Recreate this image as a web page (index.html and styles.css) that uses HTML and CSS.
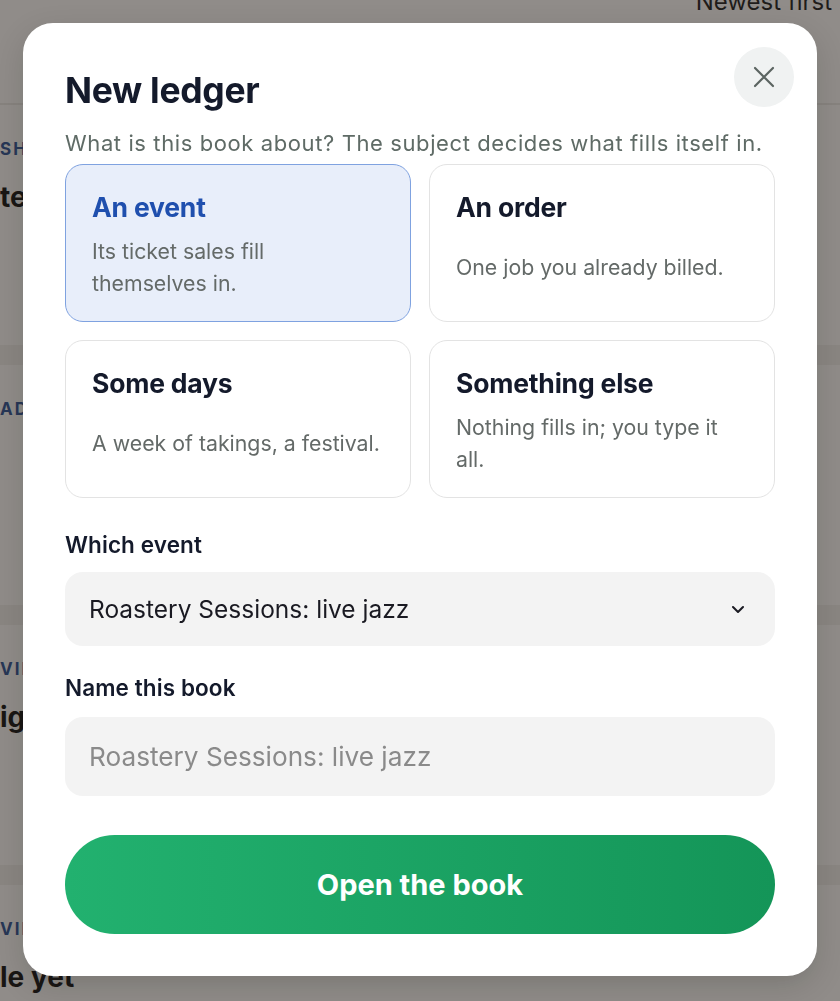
FILE: index.html
```html
<!DOCTYPE html>
<html lang="en">
<head>
    <meta charset="UTF-8">
    <meta name="viewport" content="width=device-width, initial-scale=1.0">
    <title>New ledger</title>
    <link rel="stylesheet" href="styles.css">
</head>
<body>
    <!-- Page behind the modal -->
    <div class="page">
        <div class="toolbar">
            <span class="sort">Newest first</span>
        </div>
        <div class="book-list">
            <div class="book-row">
                <p class="book-kind">SHOP</p>
                <p class="book-title">tea tasting</p>
            </div>
            <div class="book-row">
                <p class="book-kind">ADHOC</p>
            </div>
            <div class="book-row">
                <p class="book-kind">VIEW</p>
                <p class="book-title">ig night</p>
            </div>
            <div class="book-row">
                <p class="book-kind">VIEW</p>
                <p class="book-title">le yet</p>
            </div>
        </div>
    </div>

    <!-- Modal -->
    <div class="overlay">
        <div class="modal">
            <div class="modal-head">
                <h2>New ledger</h2>
                <button class="btn-close" aria-label="Close">
                    <svg width="22" height="22" viewBox="0 0 22 22" fill="none" stroke="currentColor" stroke-width="2.2" stroke-linecap="round">
                        <path d="M2 2 L20 20 M20 2 L2 20" />
                    </svg>
                </button>
            </div>
            <p class="lead">What is this book about? The subject decides what fills itself in.</p>

            <div class="subjects">
                <button class="subject selected">
                    <span class="subject-title">An event</span>
                    <span class="subject-desc">Its ticket sales fill themselves in.</span>
                </button>
                <button class="subject">
                    <span class="subject-title">An order</span>
                    <span class="subject-desc">One job you already billed.</span>
                </button>
                <button class="subject">
                    <span class="subject-title">Some days</span>
                    <span class="subject-desc">A week of takings, a festival.</span>
                </button>
                <button class="subject">
                    <span class="subject-title">Something else</span>
                    <span class="subject-desc">Nothing fills in; you type it all.</span>
                </button>
            </div>

            <label class="field-label">Which event</label>
            <button class="select">
                <span>Roastery Sessions: live jazz</span>
                <svg width="14" height="9" viewBox="0 0 14 9" fill="none" stroke="currentColor" stroke-width="2" stroke-linecap="round" stroke-linejoin="round">
                    <path d="M2 2 L7 7 L12 2" />
                </svg>
            </button>

            <label class="field-label">Name this book</label>
            <input class="text-input" type="text" placeholder="Roastery Sessions: live jazz" />

            <button class="btn-open">Open the book</button>
        </div>
    </div>
</body>
</html>
```

FILE: styles.css
```css
/* Basic Reset */
* {
    margin: 0;
    padding: 0;
    box-sizing: border-box;
}

body {
    font-family: Inter, "Noto Sans", sans-serif;
    background-color: #f3f2ef;
    height: 1001px;
    overflow: hidden;
}

/* Page behind */
.page {
    width: 100%;
}

.toolbar {
    height: 105px;
    display: flex;
    justify-content: flex-end;
    border-bottom: 2px solid #e2e0dc;
}

.sort {
    font-size: 24px;
    color: #1b1b1b;
    margin-top: -13px;
    margin-right: 8px;
}

.book-row {
    height: 260px;
    padding-top: 34px;
    border-bottom: 20px solid #e8e6e2;
}

.book-row:last-child {
    height: 116px;
    border-bottom: none;
}

.book-kind {
    font-size: 17px;
    font-weight: 700;
    letter-spacing: 2px;
    color: #2b4f8f;
}

.book-title {
    font-size: 28px;
    font-weight: 700;
    color: #111;
    margin-top: 21px;
}

/* Modal */
.overlay {
    position: fixed;
    top: 0;
    left: 0;
    width: 100%;
    height: 100%;
    background-color: rgba(35, 30, 25, 0.48);
    display: flex;
    justify-content: center;
    padding-top: 23px;
}

.modal {
    background-color: #fff;
    width: 794px;
    height: 953px;
    border-radius: 30px;
    padding: 42px 42px;
    box-shadow: 0 10px 30px rgba(0, 0, 0, 0.15);
    display: flex;
    flex-direction: column;
}

.modal-head {
    display: flex;
    justify-content: space-between;
    align-items: flex-start;
}

.modal h2 {
    font-size: 35.5px;
    font-weight: 700;
    color: #141a2b;
    line-height: 52px;
    letter-spacing: -0.3px;
}

.btn-close {
    width: 60px;
    height: 60px;
    border-radius: 50%;
    border: none;
    background-color: #f0f2f2;
    color: #5b6461;
    display: flex;
    align-items: center;
    justify-content: center;
    margin-top: -18px;
    margin-right: -19px;
    cursor: pointer;
}

.lead {
    font-size: 22px;
    line-height: 30px;
    letter-spacing: 0.6px;
    color: #5f6b66;
    margin-top: 11px;
    margin-bottom: 6px;
    white-space: nowrap;
}

.subjects {
    display: grid;
    grid-template-columns: 1fr 1fr;
    gap: 18px;
}

.subject {
    font-family: inherit;
    text-align: left;
    background-color: #fff;
    border: 1.5px solid #e3e3e3;
    border-radius: 18px;
    padding: 24px 28px 22px 26px;
    display: flex;
    flex-direction: column;
    min-height: 158px;
    cursor: pointer;
}

.subject.selected {
    background-color: #e8eefa;
    border-color: #7fa2e0;
}

.subject-title {
    font-size: 26.5px;
    font-weight: 700;
    line-height: 36px;
    color: #141a2b;
    letter-spacing: -0.2px;
}

.subject.selected .subject-title {
    color: #1f4fae;
}

.subject-desc {
    flex: 1;
    display: flex;
    align-items: center;
    margin-top: 10px;
    font-size: 21.3px;
    line-height: 32px;
    color: #646a68;
}

.field-label {
    font-size: 22.5px;
    font-weight: 600;
    line-height: 26px;
    letter-spacing: 0.1px;
    color: #141a2b;
    margin-top: 34px;
    margin-bottom: 14px;
}

.field-label + .text-input {
    margin-top: 2px;
}

.select {
    font-family: inherit;
    height: 74px;
    border: none;
    border-radius: 18px;
    background-color: #f3f3f3;
    display: flex;
    align-items: center;
    justify-content: space-between;
    padding: 0 30px 0 24px;
    font-size: 24.5px;
    color: #1a1a22;
    text-align: left;
    cursor: pointer;
}

.select + .field-label {
    margin-top: 29px;
}

.text-input {
    font-family: inherit;
    height: 79px;
    border: none;
    border-radius: 18px;
    background-color: #f3f3f3;
    padding: 0 24px;
    font-size: 26.2px;
    color: #1a1a22;
    outline: none;
}

.text-input::placeholder {
    color: #8a8a8a;
}

.btn-open {
    font-family: inherit;
    margin-top: 39px;
    height: 99px;
    border: none;
    border-radius: 50px;
    background: linear-gradient(90deg, #22b16f, #149558);
    color: #fff;
    font-size: 29px;
    font-weight: 700;
    cursor: pointer;
}
```
